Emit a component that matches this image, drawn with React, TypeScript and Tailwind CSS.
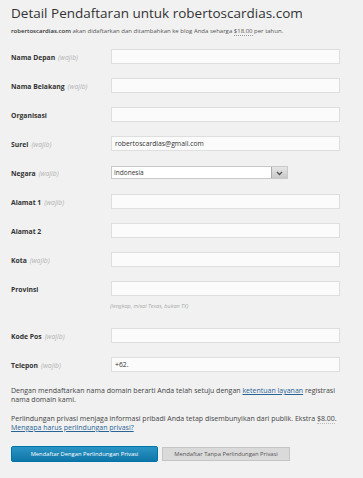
import React from 'react';

type Field = { label: string; required?: boolean; value?: string; hint?: string; select?: boolean };

const fields: Field[] = [
  { label: 'Nama Depan', required: true },
  { label: 'Nama Belakang', required: true },
  { label: 'Organisasi' },
  { label: 'Surel', required: true, value: 'robertoscardias@gmail.com' },
  { label: 'Negara', required: true, value: 'Indonesia', select: true },
  { label: 'Alamat 1', required: true },
  { label: 'Alamat 2' },
  { label: 'Kota', required: true },
  { label: 'Provinsi', hint: '(lengkap, misal Texas, bukan TX)' },
  { label: 'Kode Pos', required: true },
  { label: 'Telepon', required: true, value: '+62.' },
];

const Row: React.FC<{ f: Field }> = ({ f }) => (
  <div className={f.hint ? 'mb-[18px]' : 'mb-[14px]'}>
    <div className="flex items-center h-[15px]">
      <div className="w-[100px] text-[6.8px] font-bold text-[#333] mt-[3px]">
        {f.label}
        {f.required && <span className="font-normal italic text-[#b4b4b4] ml-[3px]">(wajib)</span>}
      </div>
      {f.select ? (
        <div className="flex h-[13px] w-[177px] border border-[#c8c8c8] bg-white">
          <div className="flex-1 text-[6.5px] text-[#333] pl-[2px] leading-[11px]">{f.value}</div>
          <div className="w-[16px] h-full border-l border-[#aaa] bg-gradient-to-b from-[#e6e6e6] to-[#c9c9c9] flex items-center justify-center">
            <svg width="7" height="5" viewBox="0 0 7 5" className="mt-[2px]">
              <path d="M1 1 L3.5 3.5 L6 1" stroke="#555" strokeWidth="1.4" fill="none" />
            </svg>
          </div>
        </div>
      ) : (
        <div className="h-[15px] w-[229px] border border-[#dedede] bg-[#fbfbfb] text-[6.8px] text-[#333] pl-[3px] leading-[13px]">
          {f.value}
        </div>
      )}
    </div>
    {f.hint && (
      <div className="pl-[99px] mt-[6px] text-[5.5px] italic text-[#aaa] leading-[8px]">{f.hint}</div>
    )}
  </div>
);

export default function App() {
  return (
    <div className="w-[363px] h-[478px] bg-[#f1f1f1] px-[11px] pt-[4px] text-[#444]" style={{ fontFamily: '"Open Sans", sans-serif' }}>
      <h1 className="text-[13.5px] leading-[18px] text-[#333]">Detail Pendaftaran untuk robertoscardias.com</h1>
      <p className="mt-[5px] text-[6px] leading-[9px] text-[#555]">
        <span className="text-[#333] font-semibold">robertoscardias.com</span> akan didaftarkan dan ditambahkan ke blog Anda seharga{' '}
        <span className="border-b border-dotted border-[#999]">$18.00</span> per tahun.
      </p>
      <div className="mt-[13px]">
        {fields.map((f) => (
          <Row key={f.label} f={f} />
        ))}
      </div>
      <p className="mt-[1px] text-[7px] leading-[9px] text-[#444]">
        Dengan mendaftarkan nama domain berarti Anda telah setuju dengan{' '}
        <span className="text-[#2a6496] underline underline-offset-[1px]">ketentuan layanan</span> registrasi
        <br />
        nama domain kami.
      </p>
      <p className="mt-[10px] text-[7px] leading-[9px] text-[#444]">
        Perlindungan privasi menjaga informasi pribadi Anda tetap disembunyikan dari publik. Ekstra{' '}
        <span className="border-b border-dotted border-[#bbb]">$8.00</span>.
        <br />
        <span className="text-[#2a6496] underline underline-offset-[1px]">Mengapa harus perlindungan privasi?</span>
      </p>
      <div className="flex items-center mt-[14px] gap-[4px]">
        <button className="h-[16px] w-[147px] rounded-[2px] border border-[#0073aa] bg-gradient-to-b from-[#2a95c5] to-[#0f76a8] text-white text-[5.8px]">
          Mendaftar Dengan Perlindungan Privasi
        </button>
        <button className="h-[14px] w-[128px] border border-[#c5c5c5] bg-[#dadada] text-[#555] text-[5.8px]">
          Mendaftar Tanpa Perlindungan Privasi
        </button>
      </div>
    </div>
  );
}
